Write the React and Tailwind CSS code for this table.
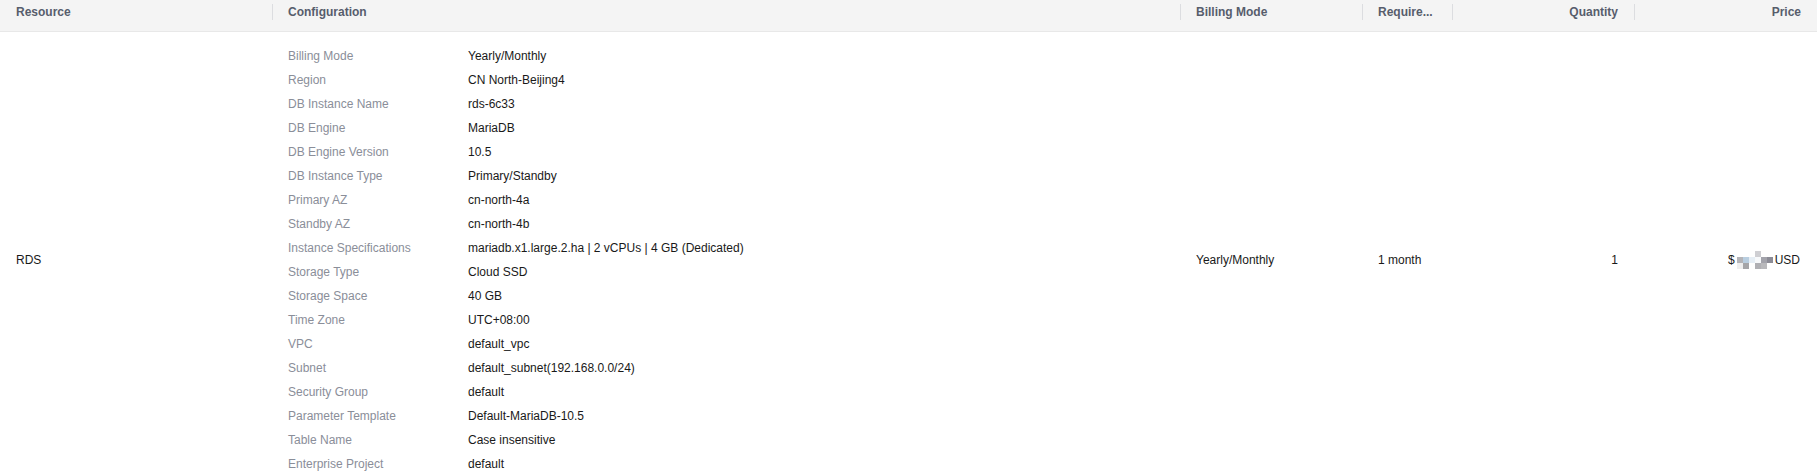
import React from 'react';

const config = [
    ['Billing Mode', 'Yearly/Monthly'],
    ['Region', 'CN North-Beijing4'],
    ['DB Instance Name', 'rds-6c33'],
    ['DB Engine', 'MariaDB'],
    ['DB Engine Version', '10.5'],
    ['DB Instance Type', 'Primary/Standby'],
    ['Primary AZ', 'cn-north-4a'],
    ['Standby AZ', 'cn-north-4b'],
    ['Instance Specifications', 'mariadb.x1.large.2.ha | 2 vCPUs | 4 GB (Dedicated)'],
    ['Storage Type', 'Cloud SSD'],
    ['Storage Space', '40 GB'],
    ['Time Zone', 'UTC+08:00'],
    ['VPC', 'default_vpc'],
    ['Subnet', 'default_subnet(192.168.0.0/24)'],
    ['Security Group', 'default'],
    ['Parameter Template', 'Default-MariaDB-10.5'],
    ['Table Name', 'Case insensitive'],
    ['Enterprise Project', 'default'],
];

// blurred price mosaic, 3 rows of 6 blocks
const mosaic = [
    ['', '', '', 'bg-[#cfcfd3]', '', ''],
    ['bg-[#b4b4b8]', 'bg-[#b9cee0]', 'bg-[#e6eef5]', 'bg-[#f7f9fb]', 'bg-[#a3a3ab]', 'bg-[#8c8c96]'],
    ['bg-[#eeeeee]', 'bg-[#a5a5a8]', 'bg-[#ffffff]', 'bg-[#b0b0b4]', 'bg-[#b9b9bc]', 'bg-[#ffffff]'],
];

const HeadCell = ({ label, sep, right }) => (
    <div className="flex items-start pt-1 h-8">
        {sep ? <span className="w-px h-4 bg-[#dcdde0] shrink-0"></span> : <span className="w-px shrink-0"></span>}
        <span className={'leading-4 font-bold text-[#575d6c] whitespace-nowrap ' + (right ? 'ml-auto pr-4' : 'pl-[15px]')}>
            {label}
        </span>
    </div>
);

const App = () => {
    return (
        <div className="w-[1817px] bg-white text-[12px] font-['Liberation_Sans',Arial,sans-serif]">
            <div className="grid grid-cols-[272px_908px_182px_90px_182px_1fr] bg-[#f4f4f4] border-b border-[#e8e8e8] h-8">
                <HeadCell label="Resource" />
                <HeadCell label="Configuration" sep />
                <HeadCell label="Billing Mode" sep />
                <HeadCell label="Require..." sep />
                <HeadCell label="Quantity" sep right />
                <HeadCell label="Price" sep right />
            </div>
            <div className="grid grid-cols-[272px_908px_182px_90px_182px_1fr] text-[#191919]">
                <div className="flex items-center pl-4">RDS</div>
                <div className="py-3 pl-4">
                    {config.map(([k, v]) => (
                        <div key={k} className="flex h-6 items-center">
                            <span className="w-[180px] shrink-0 text-[#8a8e99]">{k}</span>
                            <span>{v}</span>
                        </div>
                    ))}
                </div>
                <div className="flex items-center pl-4">Yearly/Monthly</div>
                <div className="flex items-center pl-4 whitespace-nowrap">1 month</div>
                <div className="flex items-center justify-end pr-4">1</div>
                <div className="flex items-center justify-end pr-[17px]">
                    <span>$</span>
                    <span className="flex flex-col mx-[2px]">
                        {mosaic.map((row, i) => (
                            <span key={i} className="flex">
                                {row.map((c, j) => (
                                    <span key={j} className={'w-[6px] h-[6px] ' + c}></span>
                                ))}
                            </span>
                        ))}
                    </span>
                    <span>USD</span>
                </div>
            </div>
        </div>
    );
};

export default App;
